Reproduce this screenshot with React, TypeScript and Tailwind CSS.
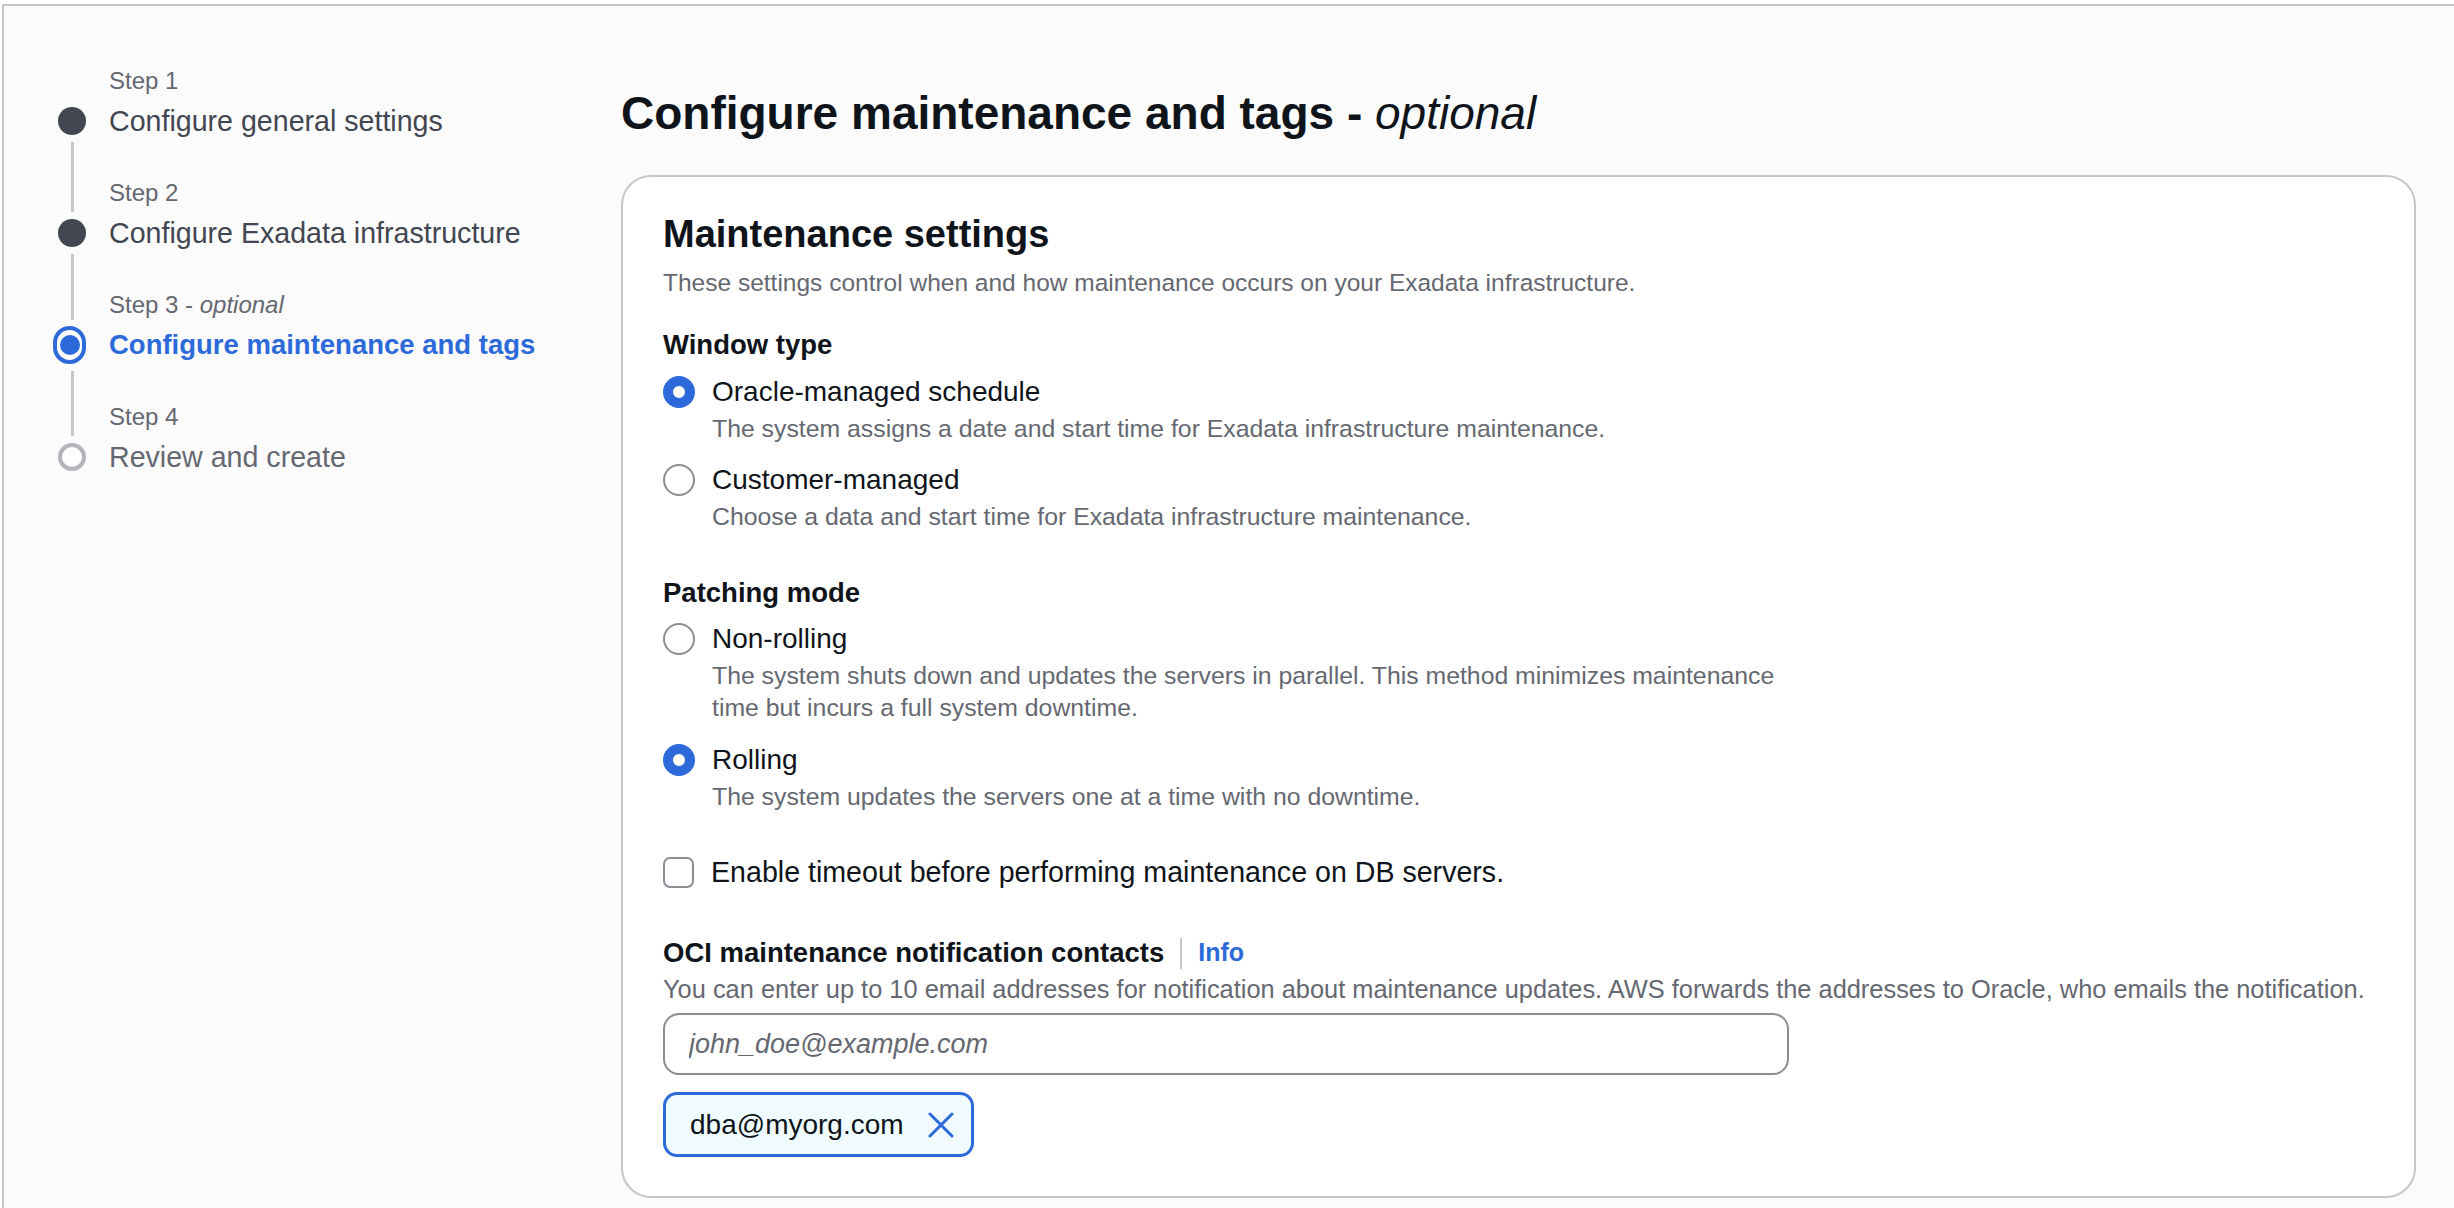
const steps = [
  { label: 'Step 1', title: 'Configure general settings', state: 'done' },
  { label: 'Step 2', title: 'Configure Exadata infrastructure', state: 'done' },
  { label: 'Step 3', optional: true, title: 'Configure maintenance and tags', state: 'active' },
  { label: 'Step 4', title: 'Review and create', state: 'todo' },
]

function StepDot({ state }: { state: string }) {
  if (state === 'done') return <span className="block w-[28px] h-[28px] rounded-full bg-[#424650]" />
  if (state === 'active')
    return (
      <span className="-ml-[5px] flex w-[38px] h-[38px] items-center justify-center rounded-full border-[4px] border-[#2d6ad9] bg-white">
        <span className="block w-[20px] h-[20px] rounded-full bg-[#2d6ad9]" />
      </span>
    )
  return <span className="block w-[28px] h-[28px] rounded-full border-[4px] border-[#b4b4bb] bg-white" />
}

function Radio({ checked, label, desc }: { checked?: boolean; label: string; desc: string }) {
  return (
    <div className="flex gap-[17px]">
      <div className="h-[40px] flex items-center shrink-0">
        {checked ? (
          <span className="block w-[32px] h-[32px] rounded-full border-[10px] border-[#2d6ad9] bg-white" />
        ) : (
          <span className="block w-[32px] h-[32px] rounded-full border-2 border-[#8c8c94] bg-white" />
        )}
      </div>
      <div>
        <div className="text-[28px] leading-[40px] text-[#0f141a]">{label}</div>
        <div className="mt-[1px] max-w-[1075px] text-[24.8px] leading-[32px] text-[#656871]">{desc}</div>
      </div>
    </div>
  )
}

export default function App() {
  return (
    <div className="h-[1208px] w-full overflow-hidden bg-white font-['Liberation_Sans',Arial,sans-serif]">
      <div className="mt-[4px] ml-[2px] flex h-[1204px] border-t-2 border-l-2 border-[#c6c6cd] bg-[#fbfbfb]">
        {/* Wizard steps */}
        <nav className="w-[617px] shrink-0 pl-[54px] pt-[59px]">
          {steps.map((s, i) => (
            <div key={s.label} className="grid grid-cols-[28px_1fr] grid-rows-[36px_40px_36px] gap-x-[23px]">
              <div className="flex justify-center">
                {i > 0 && (
                  <span className={`block w-[3px] bg-[#c6c6cd] ${s.state === 'active' ? 'h-[31px]' : 'h-[35px]'}`} />
                )}
              </div>
              <div className="text-[24px] leading-[32px] text-[#656871]">
                {s.label}
                {s.optional && (
                  <>
                    {' - '}
                    <i>optional</i>
                  </>
                )}
              </div>
              <div className="flex items-center">
                <StepDot state={s.state} />
              </div>
              <div
                className={`leading-[40px] whitespace-nowrap ${
                  s.state === 'active'
                    ? 'text-[27.5px] font-bold text-[#2d6ad9]'
                    : s.state === 'todo'
                      ? 'text-[28.6px] text-[#656871]'
                      : 'text-[28.6px] text-[#424650]'
                }`}
              >
                {s.title}
              </div>
              <div className="flex justify-center">
                {i < steps.length - 1 && (
                  <span className={`block w-[3px] bg-[#c6c6cd] ${s.state === 'active' ? 'mt-[6px] h-[30px]' : 'mt-[1px] h-[35px]'}`} />
                )}
              </div>
              <div />
            </div>
          ))}
        </nav>

        {/* Main */}
        <main className="flex-1 pt-[79px] pr-[38px]">
          <h1 className="text-[46px] leading-[56px] font-bold text-[#0f141a] whitespace-nowrap">
            Configure maintenance and tags - <i className="font-normal">optional</i>
          </h1>

          <section className="mt-[34px] rounded-[30px] border-2 border-[#c6c6cd] bg-white px-[40px] pt-[33px] pb-[39px]">
            <h2 className="text-[38px] leading-[48px] font-bold text-[#0f141a]">Maintenance settings</h2>
            <p className="mt-[9px] text-[24.5px] leading-[32px] text-[#656871]">
              These settings control when and how maintenance occurs on your Exadata infrastructure.
            </p>

            <div className="mt-[26px] text-[27.5px] leading-[40px] font-bold text-[#0f141a]">Window type</div>
            <div className="mt-[7px] flex flex-col gap-[15px]">
              <Radio
                checked
                label="Oracle-managed schedule"
                desc="The system assigns a date and start time for Exadata infrastructure maintenance."
              />
              <Radio
                label="Customer-managed"
                desc="Choose a data and start time for Exadata infrastructure maintenance."
              />
            </div>

            <div className="mt-[40px] text-[27.5px] leading-[40px] font-bold text-[#0f141a]">Patching mode</div>
            <div className="mt-[6px] flex flex-col gap-[16px]">
              <Radio
                label="Non-rolling"
                desc="The system shuts down and updates the servers in parallel. This method minimizes maintenance time but incurs a full system downtime."
              />
              <Radio checked label="Rolling" desc="The system updates the servers one at a time with no downtime." />
            </div>

            <div className="mt-[39px] flex items-center gap-[17px] h-[40px]">
              <span className="block w-[31px] h-[31px] rounded-[7px] border-2 border-[#8c8c94] bg-white" />
              <span className="text-[28.6px] leading-[40px] text-[#0f141a]">
                Enable timeout before performing maintenance on DB servers.
              </span>
            </div>

            <div className="mt-[41px] flex items-center h-[40px]">
              <span className="text-[27.5px] leading-[40px] font-bold text-[#0f141a]">
                OCI maintenance notification contacts
              </span>
              <span className="ml-[16px] block w-[2px] h-[31px] bg-[#c6c6cd]" />
              <span className="ml-[16px] text-[25px] font-bold text-[#2d6ad9]">Info</span>
            </div>
            <p className="text-[25.4px] leading-[32px] text-[#656871] whitespace-nowrap">
              You can enter up to 10 email addresses for notification about maintenance updates. AWS forwards the
              addresses to Oracle, who emails the notification.
            </p>

            <input
              className="mt-[8px] block w-[1126px] h-[62px] rounded-[16px] border-2 border-[#8c8c94] bg-white pl-[24px] text-[27px] text-[#0f141a] outline-none placeholder:italic placeholder:text-[#656871]"
              placeholder="john_doe@example.com"
            />

            <div className="mt-[17px] inline-flex h-[65px] w-[311px] items-center justify-between rounded-[14px] border-[3px] border-[#2d6ad9] bg-[#f0fbff] pl-[24px] pr-[17px]">
              <span className="text-[28px] text-[#0f141a]">dba@myorg.com</span>
              <svg width="26" height="26" viewBox="0 0 26 26" fill="none" stroke="#2d6ad9" strokeWidth="3" strokeLinecap="round">
                <path d="M2 2 L24 24 M24 2 L2 24" />
              </svg>
            </div>
          </section>
        </main>
      </div>
    </div>
  )
}
